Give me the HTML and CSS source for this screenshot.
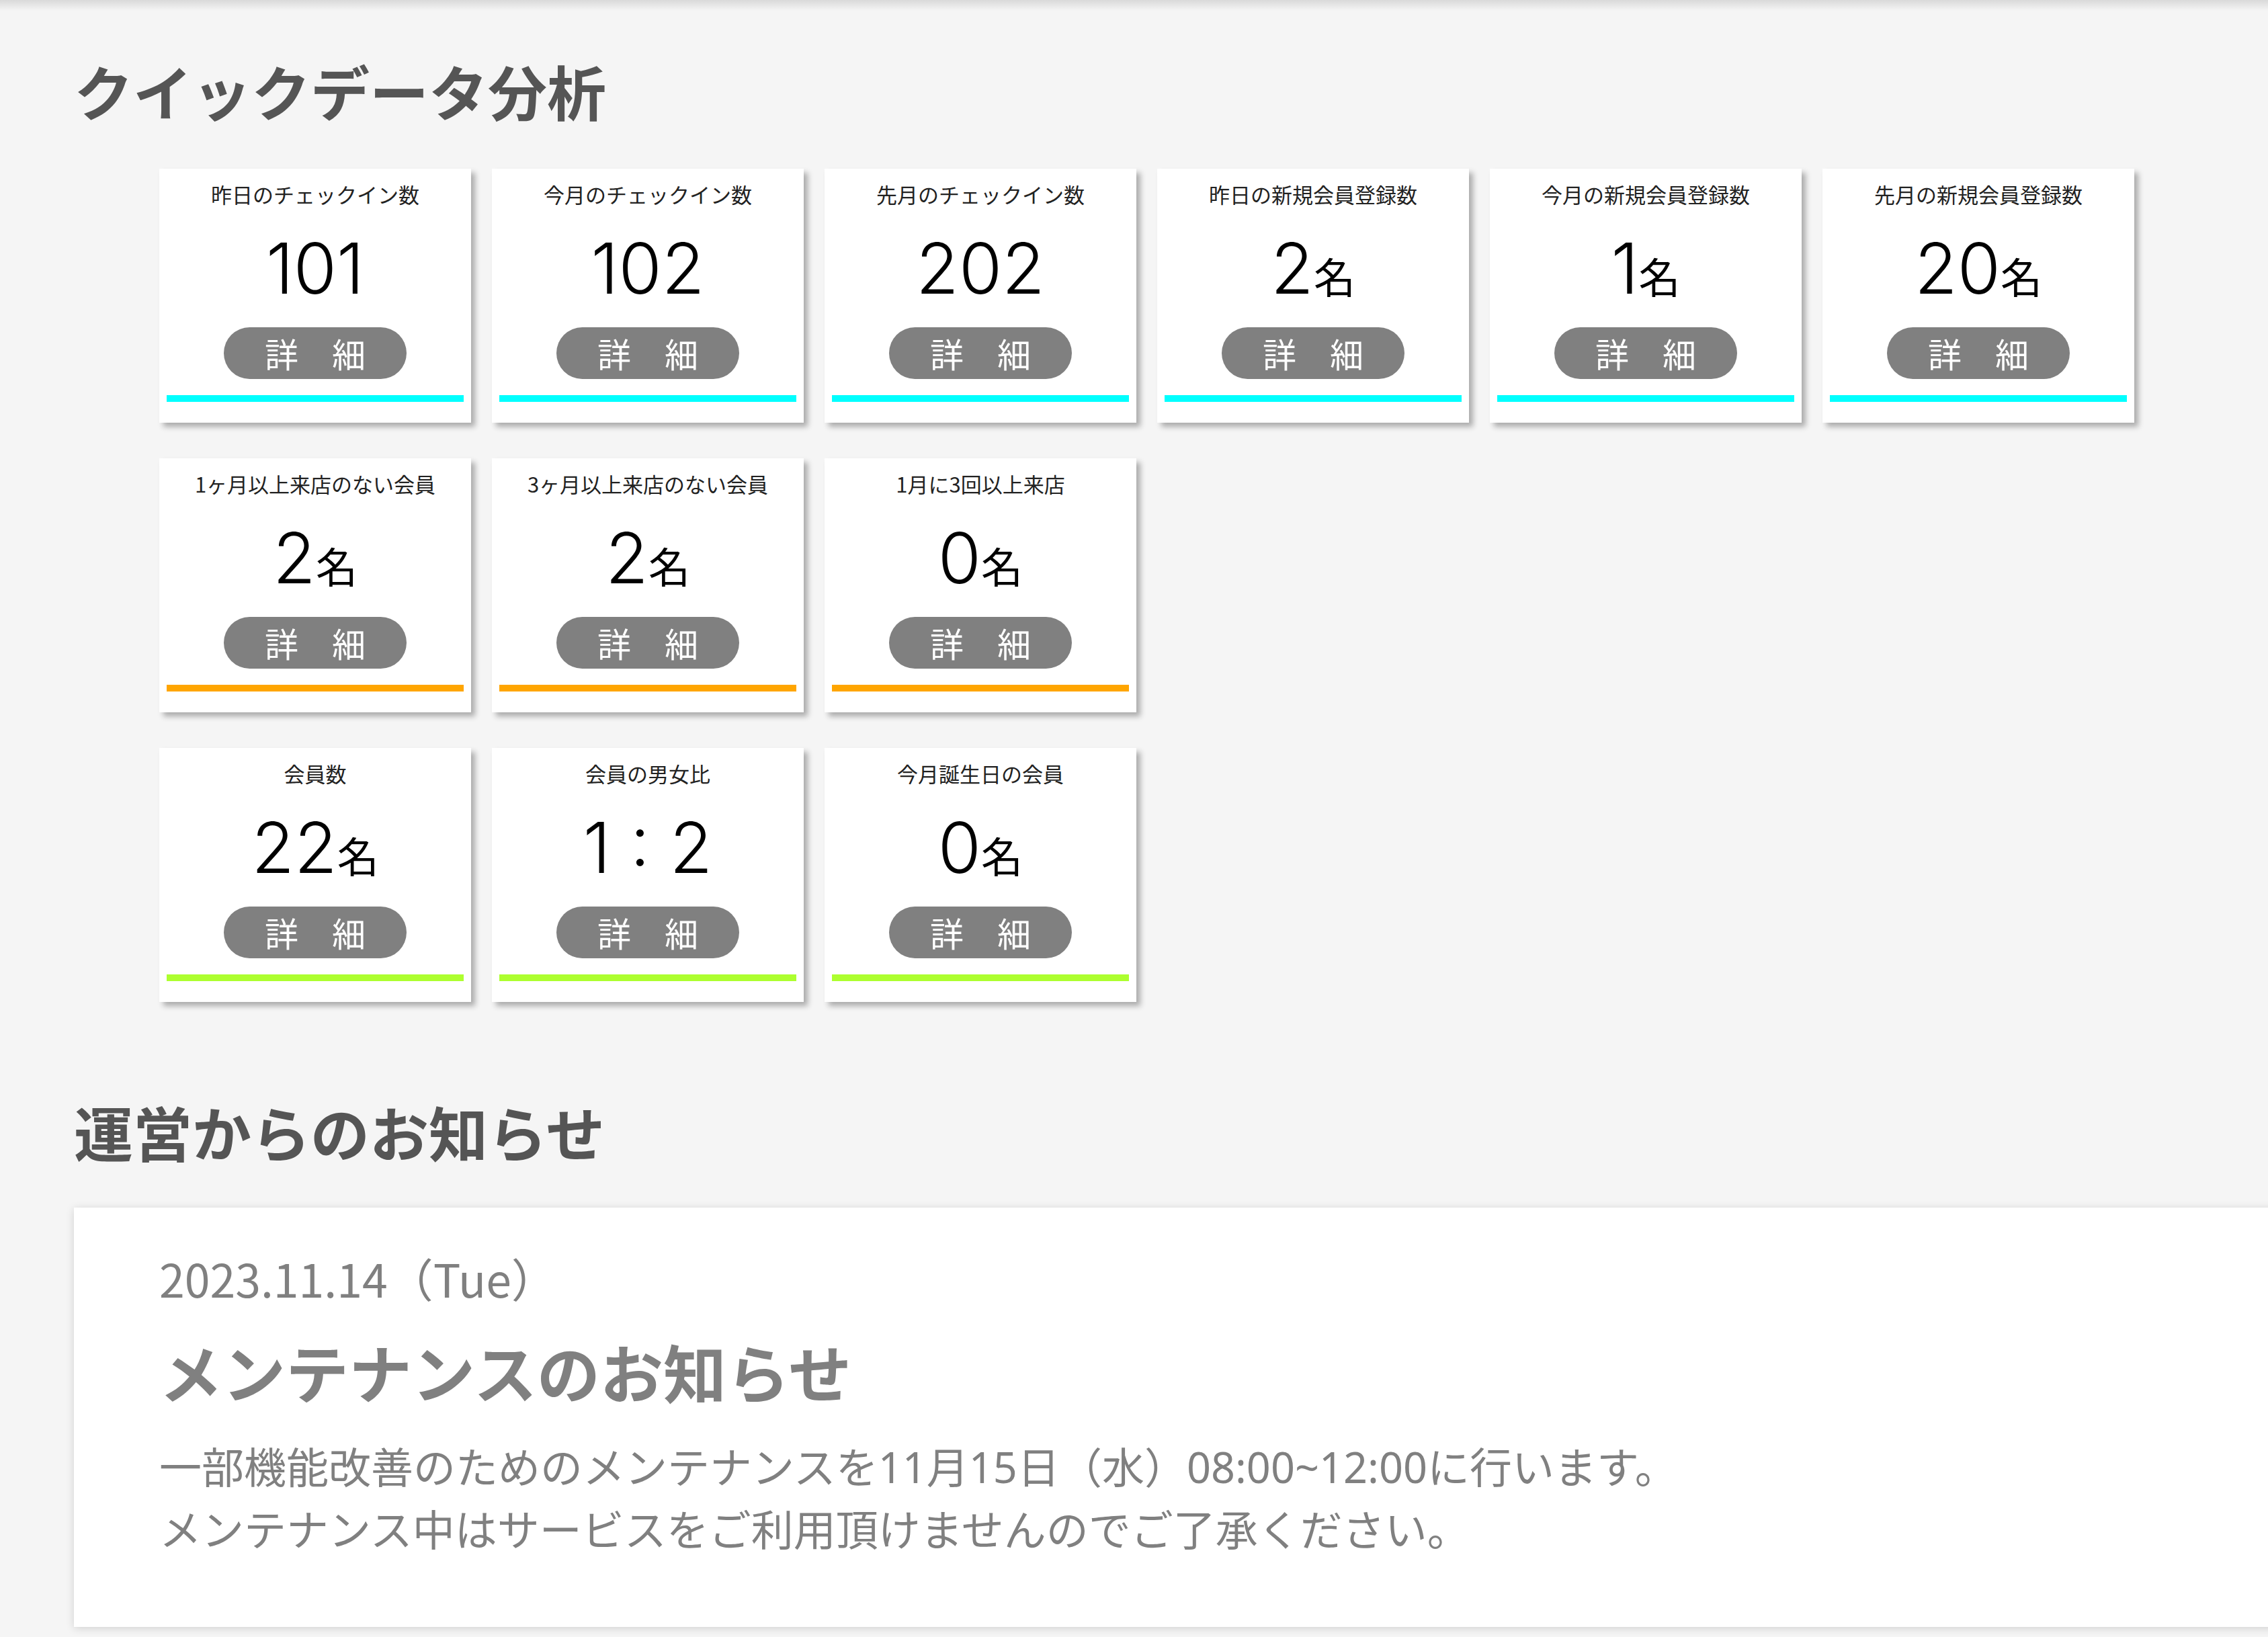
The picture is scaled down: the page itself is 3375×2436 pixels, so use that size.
FILE: index.html
```html
<!DOCTYPE html>
<html lang="ja">
<head>
	<meta charset="utf-8">
	<title>クイックデータ分析</title>
	<link rel="stylesheet" href="styles.css">
</head>
<body>
	<div class="header-shadow"></div>

	<div class="main">
		<h2 class="section-title">クイックデータ分析</h2>

		<div class="stat-grid">
			<div class="stat-card">
				<p class="stat-label">昨日のチェックイン数</p>
				<p class="stat-value">101</p>
				<a class="detail-btn" href="#">詳　細</a>
				<div class="stat-bar bar-cyan"></div>
			</div>
			<div class="stat-card">
				<p class="stat-label">今月のチェックイン数</p>
				<p class="stat-value">102</p>
				<a class="detail-btn" href="#">詳　細</a>
				<div class="stat-bar bar-cyan"></div>
			</div>
			<div class="stat-card">
				<p class="stat-label">先月のチェックイン数</p>
				<p class="stat-value">202</p>
				<a class="detail-btn" href="#">詳　細</a>
				<div class="stat-bar bar-cyan"></div>
			</div>
			<div class="stat-card">
				<p class="stat-label">昨日の新規会員登録数</p>
				<p class="stat-value">2<span class="unit">名</span></p>
				<a class="detail-btn" href="#">詳　細</a>
				<div class="stat-bar bar-cyan"></div>
			</div>
			<div class="stat-card">
				<p class="stat-label">今月の新規会員登録数</p>
				<p class="stat-value">1<span class="unit">名</span></p>
				<a class="detail-btn" href="#">詳　細</a>
				<div class="stat-bar bar-cyan"></div>
			</div>
			<div class="stat-card">
				<p class="stat-label">先月の新規会員登録数</p>
				<p class="stat-value">20<span class="unit">名</span></p>
				<a class="detail-btn" href="#">詳　細</a>
				<div class="stat-bar bar-cyan"></div>
			</div>

			<div class="stat-card">
				<p class="stat-label">1ヶ月以上来店のない会員</p>
				<p class="stat-value">2<span class="unit">名</span></p>
				<a class="detail-btn" href="#">詳　細</a>
				<div class="stat-bar bar-orange"></div>
			</div>
			<div class="stat-card">
				<p class="stat-label">3ヶ月以上来店のない会員</p>
				<p class="stat-value">2<span class="unit">名</span></p>
				<a class="detail-btn" href="#">詳　細</a>
				<div class="stat-bar bar-orange"></div>
			</div>
			<div class="stat-card">
				<p class="stat-label">1月に3回以上来店</p>
				<p class="stat-value">0<span class="unit">名</span></p>
				<a class="detail-btn" href="#">詳　細</a>
				<div class="stat-bar bar-orange"></div>
			</div>

			<div class="stat-card row-start">
				<p class="stat-label">会員数</p>
				<p class="stat-value">22<span class="unit">名</span></p>
				<a class="detail-btn" href="#">詳　細</a>
				<div class="stat-bar bar-green"></div>
			</div>
			<div class="stat-card">
				<p class="stat-label">会員の男女比</p>
				<p class="stat-value">1 : 2</p>
				<a class="detail-btn" href="#">詳　細</a>
				<div class="stat-bar bar-green"></div>
			</div>
			<div class="stat-card">
				<p class="stat-label">今月誕生日の会員</p>
				<p class="stat-value">0<span class="unit">名</span></p>
				<a class="detail-btn" href="#">詳　細</a>
				<div class="stat-bar bar-green"></div>
			</div>
		</div>

		<h2 class="section-title news-title">運営からのお知らせ</h2>

		<div class="news-card">
			<p class="news-date">2023.11.14（Tue）</p>
			<h3 class="news-heading">メンテナンスのお知らせ</h3>
			<p class="news-body">一部機能改善のためのメンテナンスを11月15日（水）08:00~12:00に行います。<br>メンテナンス中はサービスをご利用頂けませんのでご了承ください。</p>
		</div>
	</div>
</body>
</html>
```

FILE: styles.css
```css
body {
	margin: 0;
	background: #f5f5f5;
	font-family: "Noto Sans CJK JP", sans-serif;
	overflow-x: hidden;
}

.header-shadow {
	height: 16px;
	background: linear-gradient(#d9d9d9, #f5f5f5);
}

.main {
	padding: 0 0 40px 110px;
}

.section-title {
	margin: 65px 0 64px;
	font-size: 88px;
	line-height: 1.2;
	font-weight: 700;
	color: #555;
}

/* quick data cards */
.stat-grid {
	display: grid;
	grid-template-columns: repeat(6, 464px);
	column-gap: 31px;
	row-gap: 53px;
	margin-left: 127px;
}

.row-start {
	grid-column-start: 1;
}

.stat-card {
	background: #fff;
	box-shadow: 6px 6px 8px rgba(0, 0, 0, 0.3);
	padding: 15px 0 31px;
	text-align: center;
}

.stat-label {
	margin: 0;
	font-size: 31px;
	line-height: 45px;
	color: #222;
}

.stat-value {
	margin: 26px 0 0;
	font-family: Inter, "Noto Sans CJK JP", sans-serif;
	font-size: 104px;
	font-weight: 300;
	line-height: 125px;
	color: #000;
}

.unit {
	font-family: "Noto Sans CJK JP", sans-serif;
	font-size: 62px;
	font-weight: 400;
	line-height: 1;
}

.detail-btn {
	display: block;
	width: 272px;
	height: 77px;
	margin: 25px auto 0;
	border-radius: 39px;
	background: #808080;
	color: #fff;
	font-size: 50px;
	line-height: 77px;
	text-decoration: none;
}

.stat-bar {
	height: 10px;
	margin: 24px 11px 0;
}

.bar-cyan { background: #00ffff; }
.bar-orange { background: #ffa500; }
.bar-green { background: #adff2f; }

/* notices */
.news-title {
	margin: 139px 0 62px;
}

.news-card {
	width: 3320px;
	padding: 54px 0 99px 127px;
	background: #fff;
	box-shadow: 0 2px 12px rgba(0, 0, 0, 0.15);
	color: #808080;
}

.news-date {
	margin: 0;
	font-size: 68px;
	line-height: 102px;
}

.news-heading {
	margin: 22px 0 0;
	font-size: 94px;
	line-height: 1.4;
	font-weight: 700;
}

.news-body {
	margin: 29px 0 0;
	font-family: "Noto Sans", "Noto Sans CJK JP", sans-serif;
	font-size: 63px;
	line-height: 93px;
}
```
